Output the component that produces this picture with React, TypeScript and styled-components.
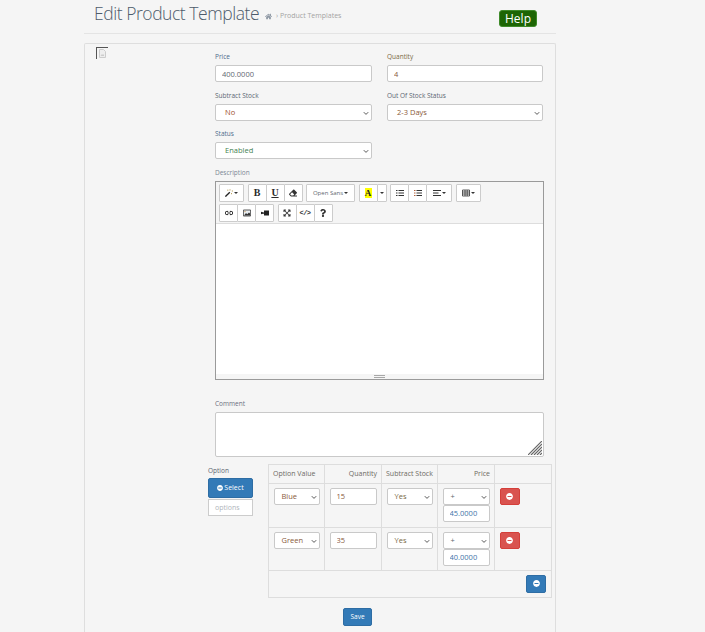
import React from "react";
import styled, { createGlobalStyle } from "styled-components";
import { FaHome, FaEraser, FaExpandArrowsAlt, FaQuestion, FaMinusCircle } from "react-icons/fa";

const GlobalStyle = createGlobalStyle`
  html, body {
    margin: 0;
    padding: 0;
    height: 632px;
    overflow: hidden;
    background: #f5f5f5;
    font-family: "Open Sans", "Liberation Sans", sans-serif;
  }
  * { box-sizing: border-box; }
`;

const Page = styled.div`
  width: 705px;
  height: 632px;
  padding: 0 149px 0 84px;
  overflow: hidden;
`;

const Header = styled.header`
  height: 34px;
  border-bottom: 1px solid #e4e4e4;
  padding-left: 10px;
  display: flex;
  align-items: flex-start;
`;

const Title = styled.h1`
  margin: 0;
  width: 164px;
  flex: none;
  font-size: 17.5px;
  line-height: 26px;
  font-weight: 300;
  letter-spacing: -0.45px;
  white-space: nowrap;
  color: #4d5b6b;
`;

const Crumbs = styled.div`
  margin: 11px 0 0 7px;
  width: 220px;
  flex: none;
  display: flex;
  align-items: center;
  gap: 2px;
  font-size: 7px;
  line-height: 10px;
  color: #a3a3a3;
  svg { width: 7px; height: 7px; color: #8d97a3; margin-right: 2px; }
`;

const HelpButton = styled.button`
  margin: 10px 0 0 14px;
  width: 38px;
  height: 17px;
  padding: 0;
  border: 1px solid #3f8a2a;
  border-radius: 3px;
  background: #1d6504;
  color: #fff;
  font-family: "Open Sans", sans-serif;
  font-size: 12px;
  line-height: 15px;
`;

const Panel = styled.main`
  margin-top: 9px;
  height: 600px;
  border: 1px solid #dedede;
  border-bottom: 0;
  border-radius: 2px 2px 0 0;
  padding: 3px 4px 0 11px;
  display: grid;
  grid-template-columns: 112px 1fr;
`;

const Thumb = styled.div`
  width: 12px;
  height: 12px;
  border-top: 1px solid #555;
  border-left: 1px solid #555;
  display: flex;
  justify-content: center;
  svg { width: 7px; height: 9px; margin-top: 1px; }
`;

const FormColumn = styled.div`
  min-width: 0;
`;

const FieldGrid = styled.div`
  margin-left: 7px;
  width: 328px;
  display: grid;
  grid-template-columns: 157px 156px;
  column-gap: 15px;
`;

const Field = styled.div`
  height: 38.5px;
`;

const Label = styled.label<{ $color?: string }>`
  display: block;
  height: 18px;
  padding-top: 5px;
  font-size: 6.5px;
  line-height: 10px;
  color: ${(p) => p.$color || "#5b6672"};
`;

const TextInput = styled.input<{ $color?: string }>`
  display: block;
  width: 100%;
  height: 17px;
  padding: 0 6px;
  background: #fff;
  border: 1px solid #c9c9c9;
  border-radius: 2px;
  font-family: "Open Sans", sans-serif;
  font-size: 7.5px;
  color: ${(p) => p.$color || "#5f6771"};
  outline: 0;
`;

const SelectBox = styled.div<{ $color?: string; $tight?: boolean }>`
  position: relative;
  display: flex;
  align-items: center;
  width: 100%;
  height: 17px;
  padding: 0 0 1px ${(p) => (p.$tight ? 7 : 9)}px;
  background: #fff;
  border: 1px solid #c9c9c9;
  border-radius: 2px;
  font-size: 7.5px;
  color: ${(p) => p.$color || "#5f6771"};
`;

const Chevron = styled.svg`
  position: absolute;
  right: 2px;
  top: 6px;
  width: 6px;
  height: 5px;
`;

const Select = ({ value, color, tight }: { value: string; color?: string; tight?: boolean }) => (
  <SelectBox $color={color} $tight={tight}>
    {value}
    <Chevron viewBox="0 0 6 5">
      <path d="M.8 1.2 3 3.4l2.2-2.2" fill="none" stroke="#555" strokeWidth="1" />
    </Chevron>
  </SelectBox>
);

const WideBlock = styled.div`
  margin-left: 7px;
  width: 329px;
`;

const Editor = styled.div`
  height: 199px;
  border: 1px solid #9a9a9a;
  display: flex;
  flex-direction: column;
`;

const Toolbar = styled.div`
  height: 42px;
  padding: 2px 3px 0;
  border-bottom: 1px solid #ddd;
  background: #f5f5f5;
`;

const ToolRow = styled.div`
  display: flex;
  gap: 3.5px;
  height: 20px;
`;

const ToolGroup = styled.div`
  display: flex;
`;

const Tool = styled.div<{ $w?: number }>`
  width: ${(p) => p.$w || 19}px;
  height: 18px;
  display: flex;
  align-items: center;
  justify-content: center;
  gap: 1px;
  background: #fff;
  border: 1px solid #ccc;
  margin-left: -1px;
  border-radius: 1px;
  color: #333;
  font-size: 6px;
  &:first-child { margin-left: 0; }
  svg { width: 8px; height: 8px; flex: none; }
`;

const FontTool = styled(Tool)`
  color: #5f6771;
`;

const Caret = styled.span`
  width: 0;
  height: 0;
  border-left: 2px solid transparent;
  border-right: 2px solid transparent;
  border-top: 2px solid #333;
`;

const HighlightA = styled.span`
  width: 7px;
  height: 10px;
  background: #ff0;
  color: #222;
  font-family: "Liberation Serif", serif;
  font-size: 9px;
  font-weight: 700;
  line-height: 10px;
  text-align: center;
`;

const SerifGlyph = styled.span<{ $under?: boolean }>`
  font-family: "Liberation Serif", serif;
  font-size: 10px;
  font-weight: 700;
  line-height: 10px;
  color: #2b2b2b;
  text-decoration: ${(p) => (p.$under ? "underline" : "none")};
`;

const CodeTool = styled.span`
  font-family: "Liberation Mono", monospace;
  font-size: 7px;
  font-weight: 700;
  letter-spacing: -0.5px;
`;

const EditArea = styled.div`
  flex: 1;
  background: #fff;
`;

const Grip = styled.div`
  height: 5px;
  background: #f5f5f5;
  display: flex;
  flex-direction: column;
  align-items: center;
  justify-content: center;
  gap: 1px;
  &::before, &::after {
    content: "";
    width: 11px;
    height: 1px;
    background: #a8a8a8;
  }
`;

const CommentLabel = styled(Label)`
  margin-top: 19px;
  height: 13px;
  padding-top: 0;
`;

const CommentBox = styled.div`
  position: relative;
  height: 45px;
  background: #fff;
  border: 1px solid #c9c9c9;
  border-radius: 2px;
`;

const ResizeMark = styled.svg`
  position: absolute;
  right: 1px;
  bottom: 1px;
  width: 14px;
  height: 14px;
`;

const OptionRow = styled.div`
  margin-top: 7px;
  display: flex;
  align-items: flex-start;
`;

const OptionSide = styled.div`
  width: 60px;
  flex: none;
`;

const OptionLabel = styled.div`
  font-size: 6.5px;
  line-height: 10px;
  margin: 2px 0 2px;
  color: #5b6672;
`;

const SelectButton = styled.button`
  display: flex;
  align-items: center;
  justify-content: center;
  gap: 1px;
  width: 45px;
  height: 20px;
  padding: 0;
  background: #337ab7;
  border: 1px solid #2e6da4;
  border-radius: 2px;
  color: #fff;
  font-family: "Open Sans", sans-serif;
  font-size: 7px;
  svg { width: 6px; height: 6px; }
`;

const OptionsBox = styled.div`
  margin-top: 1px;
  width: 45px;
  height: 17px;
  background: #fff;
  border: 1px solid #ccc;
  padding-left: 6px;
  font-size: 7px;
  line-height: 15px;
  color: #b0b5bb;
`;

const OptionTable = styled.table`
  width: 283px;
  flex: none;
  table-layout: fixed;
  border-collapse: collapse;
`;

const Th = styled.th<{ $right?: boolean; $w: number }>`
  width: ${(p) => p.$w}px;
  height: 19px;
  padding: 0 4px;
  border: 1px solid #ddd;
  font-size: 7px;
  font-weight: 400;
  white-space: nowrap;
  text-align: ${(p) => (p.$right ? "right" : "left")};
  color: #6d6a63;
`;

const Td = styled.td`
  height: 44px;
  padding: 4px 4px 0 4.5px;
  vertical-align: top;
  border: 1px solid #ddd;
  tr + tr > & { height: 43px; }
`;

const FooterCell = styled.td`
  height: 27px;
  padding: 4px 5px 0 0;
  vertical-align: top;
  border: 1px solid #ddd;
  text-align: right;
`;

const IconButton = styled.button<{ $color: string; $edge: string; $h: number }>`
  display: inline-flex;
  align-items: center;
  justify-content: center;
  vertical-align: top;
  width: 20px;
  height: ${(p) => p.$h}px;
  padding: 0;
  background: ${(p) => p.$color};
  border: 1px solid ${(p) => p.$edge};
  border-radius: 2px;
  color: #fff;
  svg { width: 7px; height: 7px; }
`;

const SaveRow = styled.div`
  margin-top: 10px;
  padding-left: 135px;
  display: flex;
`;

const SaveButton = styled.button`
  width: 29px;
  height: 18px;
  padding: 0;
  background: #337ab7;
  border: 1px solid #2e6da4;
  border-radius: 2px;
  color: #fff;
  font-family: "Open Sans", sans-serif;
  font-size: 6.5px;
`;

const options = [
  { name: "Blue", qty: "15", price: "45.0000" },
  { name: "Green", qty: "35", price: "40.0000" },
];

const WandIcon = () => (
  <svg viewBox="0 0 8 8">
    <path d="M.4 7.6 4.8 3.2" stroke="#222" strokeWidth="1.3" fill="none" />
    <path d="M5 .3v1.2M6.8 2h1.2M6.5 4v1.2M2.8.6v1.2" stroke="#a98b3a" strokeWidth=".8" fill="none" />
  </svg>
);

const LinesIcon = ({ bullets }: { bullets?: boolean }) => (
  <svg viewBox="0 0 8 8">
    <path d="M2.5 1.5H8M2.5 4H8M2.5 6.5H8" stroke="#333" strokeWidth="1" fill="none" />
    <path d="M0 1.5h1.5M0 4h1.5M0 6.5h1.5" stroke={bullets ? "#333" : "#b5623a"} strokeWidth="1" fill="none" />
  </svg>
);

const AlignIcon = () => (
  <svg viewBox="0 0 8 8">
    <path d="M0 1.5h8M0 4h5.5M0 6.5h8" stroke="#333" strokeWidth="1" fill="none" />
  </svg>
);

const GridIcon = () => (
  <svg viewBox="0 0 8 8">
    <path d="M.5 1h7v6h-7zM.5 3h7M.5 5h7M3 1v6M5.2 1v6" stroke="#333" strokeWidth=".8" fill="none" />
  </svg>
);

const LinkIcon = () => (
  <svg viewBox="0 0 8 8">
    <path d="M3.2 2.4H1.8a1.6 1.6 0 0 0 0 3.2h1.4M4.8 2.4h1.4a1.6 1.6 0 0 1 0 3.2H4.8M2.4 4h3.2" stroke="#222" strokeWidth="1" fill="none" />
  </svg>
);

const PictureIcon = () => (
  <svg viewBox="0 0 8 8">
    <path d="M.4 1h7.2v6H.4z" fill="#e9eef2" stroke="#333" strokeWidth=".8" />
    <path d="M1 6.6 3 4l1.2 1.2L6 3.4l1 1v2.2z" fill="#333" />
    <circle cx="2" cy="2.6" r=".6" fill="#c98a3a" />
  </svg>
);

const VideoIcon = () => (
  <svg viewBox="0 0 8 8">
    <path d="M3 1.6h5v4.8H3zM0 2.8l3 .6v1.2l-3 .6z" fill="#222" />
  </svg>
);

export default function App() {
  return (
    <Page>
      <GlobalStyle />
      <Header>
        <Title>Edit Product Template</Title>
        <Crumbs>
          <FaHome /> › Product Templates
        </Crumbs>
        <HelpButton>Help</HelpButton>
      </Header>
      <Panel>
        <Thumb>
          <svg viewBox="0 0 7 9">
            <path d="M.5.5h4l2 2v6h-6z" fill="#eee" stroke="#ccc" />
            <path d="M1.5 7l1.5-2 1 1 1-1v2z" fill="#ccc" />
          </svg>
        </Thumb>
        <FormColumn>
          <FieldGrid>
            <Field>
              <Label $color="#4d6b8c">Price</Label>
              <TextInput defaultValue="400.0000" />
            </Field>
            <Field>
              <Label $color="#7a6a45">Quantity</Label>
              <TextInput defaultValue="4" $color="#8a5a3a" />
            </Field>
            <Field>
              <Label>Subtract Stock</Label>
              <Select value="No" color="#a0522d" />
            </Field>
            <Field>
              <Label>Out Of Stock Status</Label>
              <Select value="2-3 Days" color="#8a5a3a" />
            </Field>
            <Field>
              <Label $color="#4d6b8c">Status</Label>
              <Select value="Enabled" color="#3f7f4f" />
            </Field>
          </FieldGrid>
          <WideBlock>
            <Label $color="#7b8794">Description</Label>
            <Editor>
              <Toolbar>
                <ToolRow>
                  <ToolGroup>
                    <Tool $w={25}>
                      <WandIcon />
                      <Caret />
                    </Tool>
                  </ToolGroup>
                  <ToolGroup>
                    <Tool>
                      <SerifGlyph>B</SerifGlyph>
                    </Tool>
                    <Tool>
                      <SerifGlyph $under>U</SerifGlyph>
                    </Tool>
                    <Tool>
                      <FaEraser />
                    </Tool>
                  </ToolGroup>
                  <ToolGroup>
                    <FontTool $w={49}>
                      Open Sans <Caret />
                    </FontTool>
                  </ToolGroup>
                  <ToolGroup>
                    <Tool>
                      <HighlightA>A</HighlightA>
                    </Tool>
                    <Tool $w={10}>
                      <Caret />
                    </Tool>
                  </ToolGroup>
                  <ToolGroup>
                    <Tool>
                      <LinesIcon bullets />
                    </Tool>
                    <Tool>
                      <LinesIcon />
                    </Tool>
                    <Tool $w={26}>
                      <AlignIcon />
                      <Caret />
                    </Tool>
                  </ToolGroup>
                  <ToolGroup>
                    <Tool $w={25}>
                      <GridIcon />
                      <Caret />
                    </Tool>
                  </ToolGroup>
                </ToolRow>
                <ToolRow>
                  <ToolGroup>
                    <Tool>
                      <LinkIcon />
                    </Tool>
                    <Tool>
                      <PictureIcon />
                    </Tool>
                    <Tool>
                      <VideoIcon />
                    </Tool>
                  </ToolGroup>
                  <ToolGroup>
                    <Tool>
                      <FaExpandArrowsAlt />
                    </Tool>
                    <Tool>
                      <CodeTool>&lt;/&gt;</CodeTool>
                    </Tool>
                    <Tool>
                      <FaQuestion />
                    </Tool>
                  </ToolGroup>
                </ToolRow>
              </Toolbar>
              <EditArea />
              <Grip />
            </Editor>
            <CommentLabel $color="#6b6f80">Comment</CommentLabel>
            <CommentBox>
              <ResizeMark viewBox="0 0 14 14">
                <path
                  d="M0 14 14 0M3 14 14 3M6 14 14 6M9 14l5-5M12 14l2-2"
                  stroke="#666"
                  strokeWidth="1.2"
                  fill="none"
                />
              </ResizeMark>
            </CommentBox>
          </WideBlock>
          <OptionRow>
            <OptionSide>
              <OptionLabel>Option</OptionLabel>
              <SelectButton>
                <FaMinusCircle /> Select
              </SelectButton>
              <OptionsBox>options</OptionsBox>
            </OptionSide>
            <OptionTable>
              <thead>
                <tr>
                  <Th $w={56}>Option Value</Th>
                  <Th $w={57} $right>
                    Quantity
                  </Th>
                  <Th $w={56}>Subtract Stock</Th>
                  <Th $w={57} $right>
                    Price
                  </Th>
                  <Th $w={57} />
                </tr>
              </thead>
              <tbody>
                {options.map((o) => (
                  <tr key={o.name}>
                    <Td>
                      <Select value={o.name} color="#8a5a3a" tight />
                    </Td>
                    <Td>
                      <TextInput defaultValue={o.qty} $color="#8a5a3a" />
                    </Td>
                    <Td>
                      <Select value="Yes" color="#7a6a45" tight />
                    </Td>
                    <Td>
                      <Select value="+" tight />
                      <TextInput defaultValue={o.price} $color="#3f74a8" />
                    </Td>
                    <Td>
                      <IconButton $color="#d9534f" $edge="#d43f3a" $h={17}>
                        <FaMinusCircle />
                      </IconButton>
                    </Td>
                  </tr>
                ))}
                <tr>
                  <FooterCell colSpan={5}>
                    <IconButton $color="#337ab7" $edge="#2e6da4" $h={18}>
                      <FaMinusCircle />
                    </IconButton>
                  </FooterCell>
                </tr>
              </tbody>
            </OptionTable>
          </OptionRow>
          <SaveRow>
            <SaveButton>Save</SaveButton>
          </SaveRow>
        </FormColumn>
      </Panel>
    </Page>
  );
}
